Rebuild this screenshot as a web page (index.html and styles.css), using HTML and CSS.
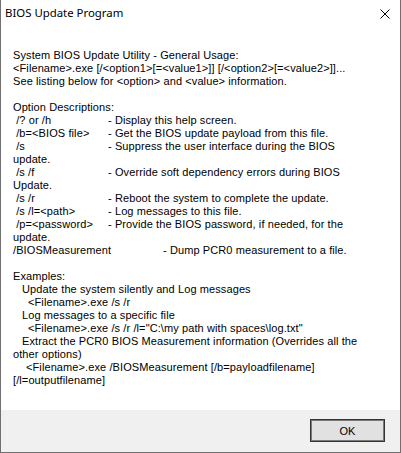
FILE: index.html
```html
<!DOCTYPE html>
<html>
<head>
  <link rel="stylesheet" href="styles.css">
</head>
<body>
  <div class="window">
    <div class="titlebar">
      <span class="title">BIOS Update Program</span>
      <svg class="close" width="10" height="10" viewBox="0 0 10 10">
        <path d="M0.5 0.5 L9.5 9.5 M9.5 0.5 L0.5 9.5" stroke="#000" stroke-width="1" fill="none"/>
      </svg>
    </div>
    <div class="content">
      <div class="text">
        <div class="line">System BIOS Update Utility - General Usage:</div>
        <div class="line">&lt;Filename&gt;.exe [/&lt;option1&gt;[=&lt;value1&gt;]] [/&lt;option2&gt;[=&lt;value2&gt;]]...</div>
        <div class="line">See listing below for &lt;option&gt; and &lt;value&gt; information.</div>
        <div class="line"></div>
        <div class="line">Option Descriptions:</div>
        <div class="line"><span class="opt">&nbsp;/? or /h</span>- Display this help screen.</div>
        <div class="line"><span class="opt">&nbsp;/b=&lt;BIOS file&gt;</span>- Get the BIOS update payload from this file.</div>
        <div class="line"><span class="opt">&nbsp;/s</span>- Suppress the user interface during the BIOS</div>
        <div class="line">update.</div>
        <div class="line"><span class="opt">&nbsp;/s /f</span>- Override soft dependency errors during BIOS</div>
        <div class="line">Update.</div>
        <div class="line"><span class="opt">&nbsp;/s /r</span>- Reboot the system to complete the update.</div>
        <div class="line"><span class="opt">&nbsp;/s /l=&lt;path&gt;</span>- Log messages to this file.</div>
        <div class="line"><span class="opt">&nbsp;/p=&lt;password&gt;</span>- Provide the BIOS password, if needed, for the</div>
        <div class="line">update.</div>
        <div class="line"><span class="opt wide">/BIOSMeasurement</span>- Dump PCR0 measurement to a file.</div>
        <div class="line"></div>
        <div class="line">Examples:</div>
        <div class="line ind1">Update the system silently and Log messages</div>
        <div class="line ind2">&lt;Filename&gt;.exe /s /r</div>
        <div class="line ind1">Log messages to a specific file</div>
        <div class="line ind2">&lt;Filename&gt;.exe /s /r /l="C:\my path with spaces\log.txt"</div>
        <div class="line ind1">Extract the PCR0 BIOS Measurement information (Overrides all the</div>
        <div class="line">other options)</div>
        <div class="line ind3">&lt;Filename&gt;.exe /BIOSMeasurement [/b=payloadfilename]</div>
        <div class="line">[/l=outputfilename]</div>
      </div>
    </div>
    <div class="footer">
      <button class="ok">OK</button>
    </div>
  </div>
</body>
</html>
```

FILE: styles.css
```css
body {
  margin: 0;
  background: #fff;
}
.window {
  width: 401px;
  height: 453px;
  box-sizing: border-box;
  border: 1px solid #707070;
  border-top: none;
  display: flex;
  flex-direction: column;
  background: #fff;
}
.titlebar {
  height: 31px;
  display: flex;
  align-items: center;
  justify-content: space-between;
  padding: 0 10px 0 4px;
  font-family: "Noto Sans", sans-serif;
  font-size: 11.4px;
  color: #000;
}
.title {
  margin-top: -6px;
}
.close {
  margin-top: -4px;
}
.content {
  flex: 1;
  padding: 18px 0 0 12px;
}
.text {
  font-family: "Liberation Sans", Arial, sans-serif;
  font-size: 11px;
  letter-spacing: 0.1px;
  line-height: 13px;
  color: #000;
  white-space: nowrap;
}
.line {
  height: 13px;
}
.opt {
  display: inline-block;
  width: 95px;
}
.opt.wide {
  width: 150px;
}
.ind1 {
  padding-left: 9px;
}
.ind2 {
  padding-left: 15px;
}
.ind3 {
  padding-left: 13px;
}
.footer {
  height: 42px;
  background: #f0f0f0;
  display: flex;
  justify-content: flex-end;
  align-items: flex-start;
  padding: 9px 15px 0 0;
  box-sizing: border-box;
}
.ok {
  width: 75px;
  height: 23px;
  margin: 0;
  padding: 0;
  background: #e1e1e1;
  border: 1px solid #333;
  box-shadow: inset 0 0 0 1px #7a7a7a;
  font-family: "Liberation Sans", Arial, sans-serif;
  font-size: 11px;
  color: #000;
}
```
